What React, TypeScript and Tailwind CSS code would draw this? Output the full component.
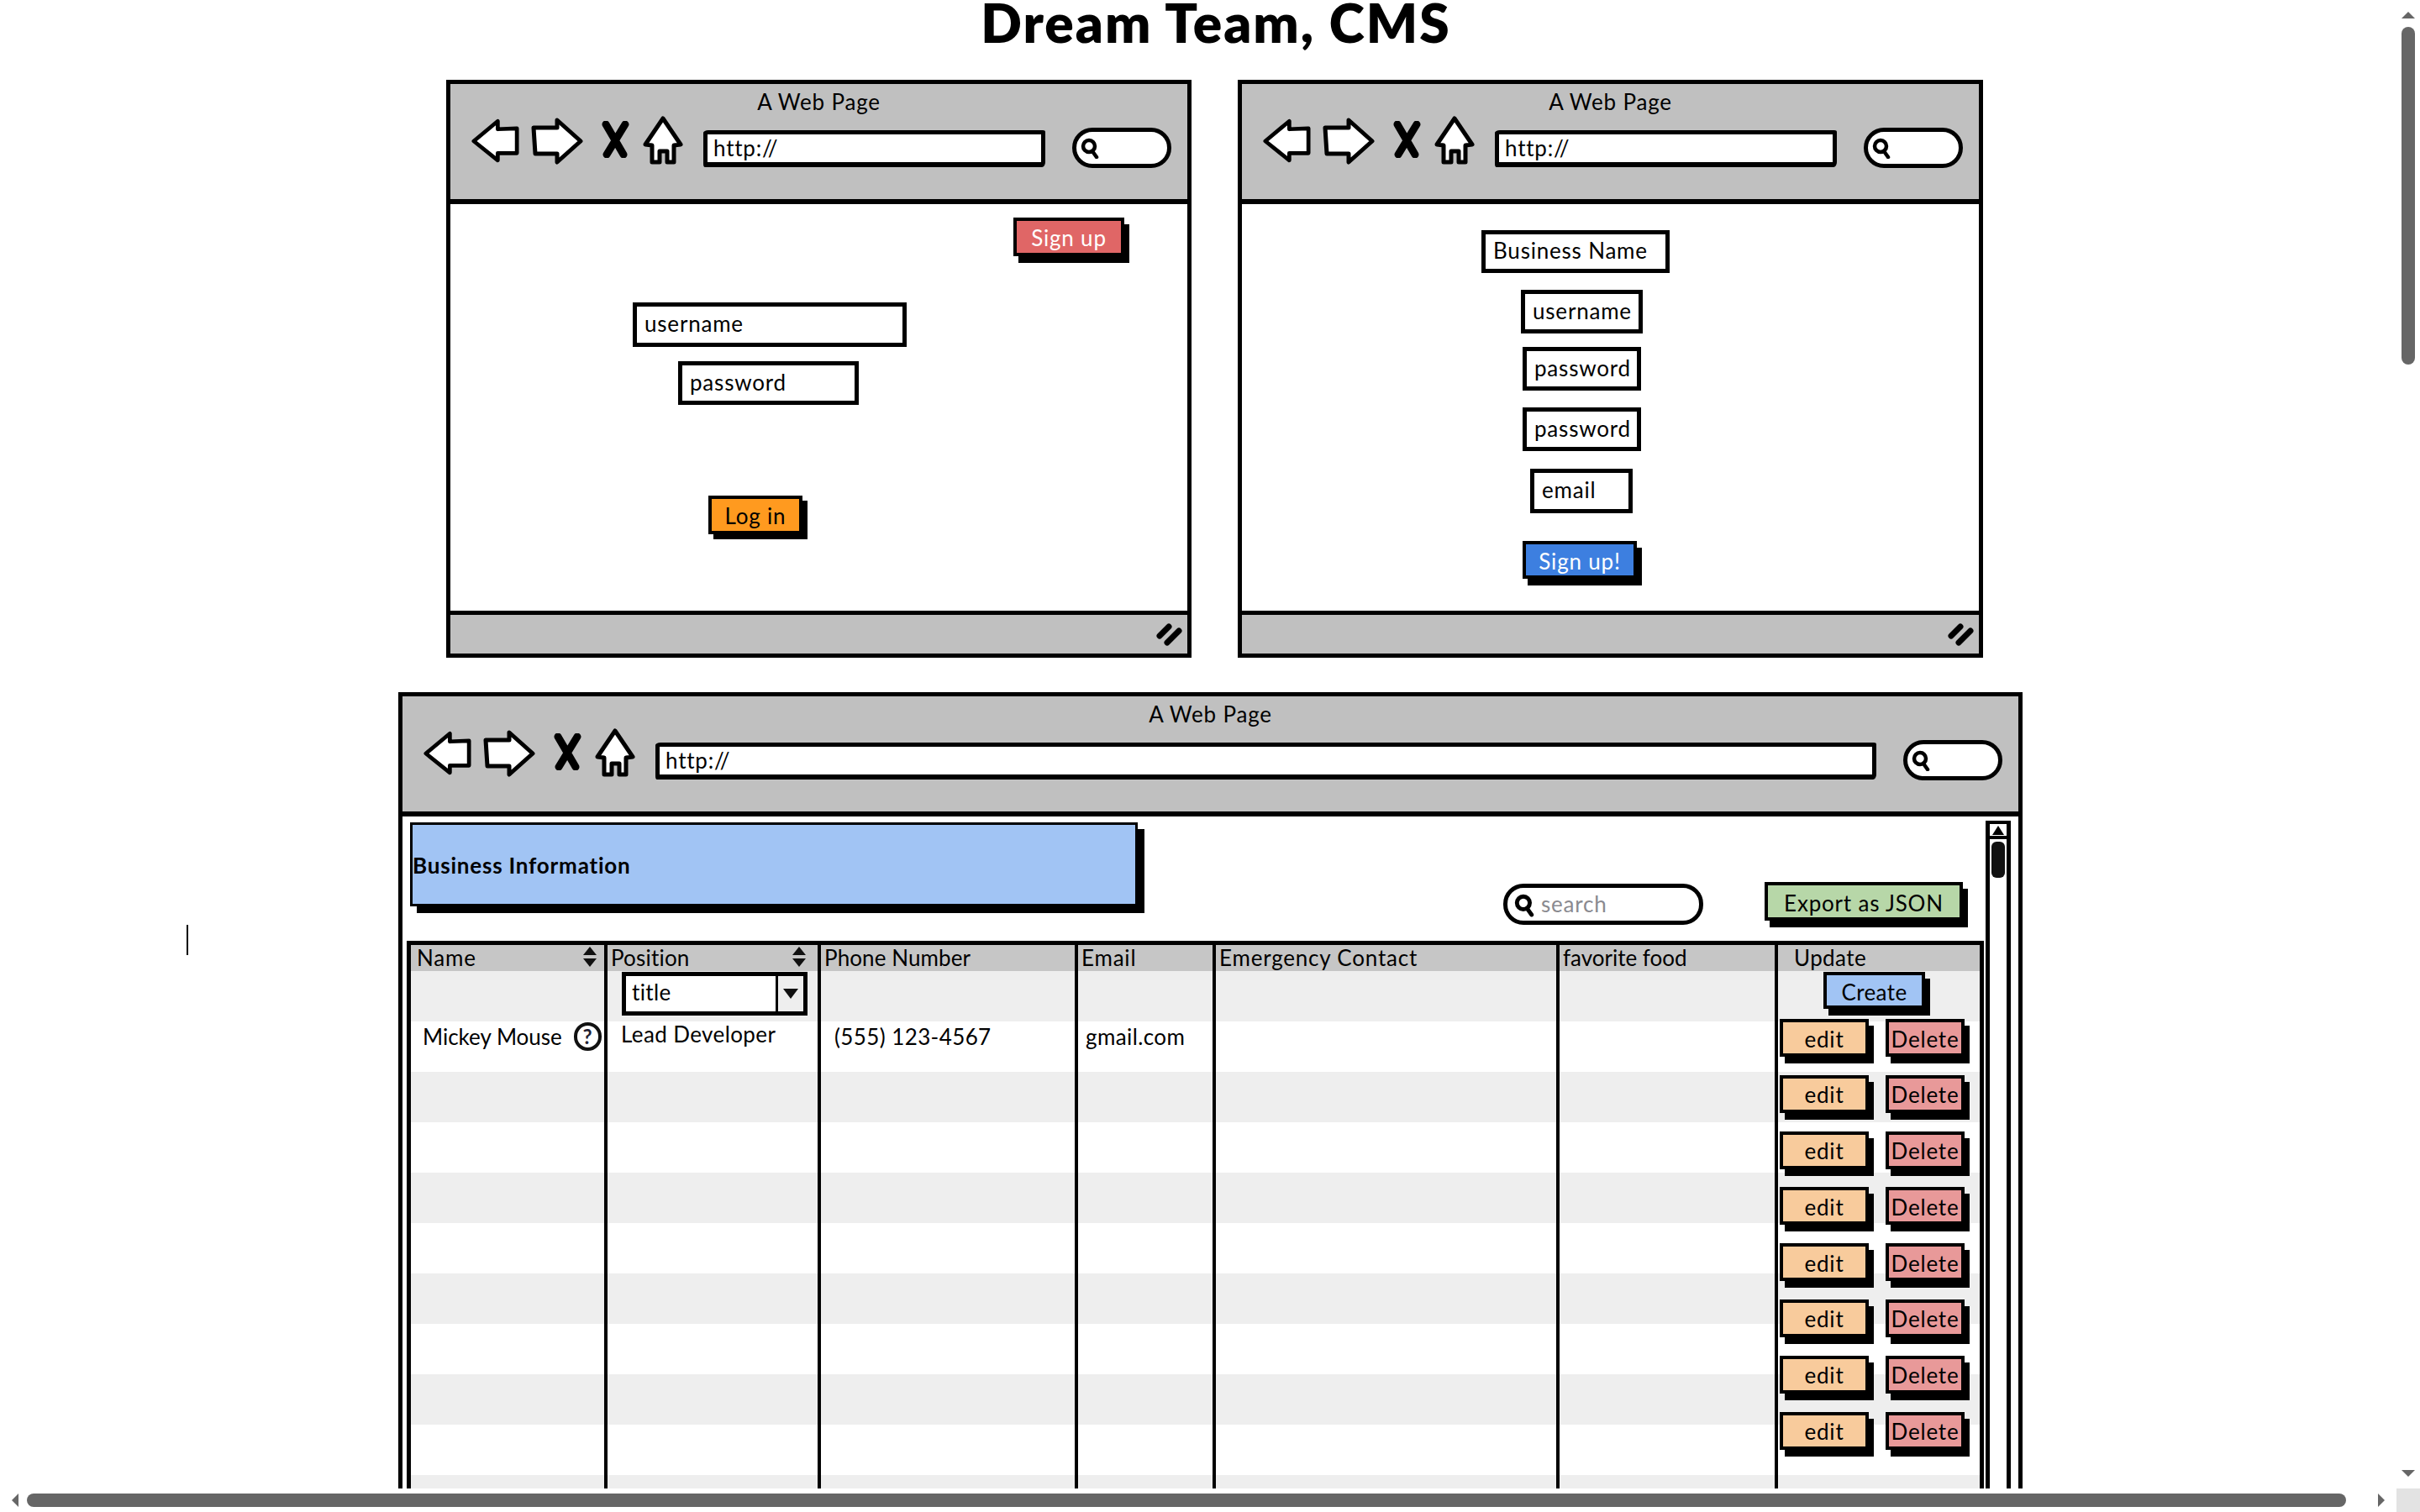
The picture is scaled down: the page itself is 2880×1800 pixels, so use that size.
import type { ReactNode } from 'react';

const FONT = "font-['Lato','Open_Sans',sans-serif]";

function BackIcon() {
  return (
    <svg className="w-[57px] h-[56px] shrink-0" viewBox="0 0 60 56">
      <path d="M3 28 L33 3 L33 13 L57 12 L57 43 L33 43 L33 52 Z" fill="#fff" stroke="#000" strokeWidth="5" strokeLinejoin="round" />
    </svg>
  );
}

function ForwardIcon() {
  return (
    <svg className="w-[62px] h-[56px] shrink-0 ml-[14px]" viewBox="0 0 62 56">
      <path d="M3 12 L31 12 L31 3 L59 28 L31 53 L31 43 L5 43 Z" fill="#fff" stroke="#000" strokeWidth="5" strokeLinejoin="round" />
    </svg>
  );
}

function StopIcon() {
  return (
    <svg className="w-[36px] h-[44px] shrink-0 ml-[20px] mt-[4px]" viewBox="0 0 36 44">
      <path d="M7 4 L28 40 M30 4 L8 40" fill="none" stroke="#000" strokeWidth="9" strokeLinecap="round" />
    </svg>
  );
}

function HomeIcon() {
  return (
    <svg className="w-[50px] h-[58px] shrink-0 ml-[14px] -mt-[2px]" viewBox="0 0 50 58">
      <path d="M25 3 L46 34 L38 35 L38 55 L30 55 L30 42 L21 42 L21 55 L12 55 L12 35 L4 34 Z" fill="#fff" stroke="#000" strokeWidth="5" strokeLinejoin="round" />
    </svg>
  );
}

function MagnifierIcon({ className }: { className: string }) {
  return (
    <svg className={className} viewBox="0 0 22 26">
      <circle cx="10" cy="11" r="7" fill="#fff" stroke="#000" strokeWidth="4.5" />
      <path d="M14 17 L19 24" stroke="#000" strokeWidth="4.5" strokeLinecap="round" />
    </svg>
  );
}

function ResizeIcon() {
  return (
    <svg className="w-[34px] h-[30px]" viewBox="0 0 34 30">
      <path d="M5 17 L16 6 M14 25 L28 11" stroke="#000" strokeWidth="7" strokeLinecap="round" />
    </svg>
  );
}

function SortIcon() {
  return (
    <svg className="w-[18px] h-[24px] shrink-0 mt-[2px]" viewBox="0 0 18 24">
      <path d="M9 0 L17 10 L1 10 Z M1 14 L17 14 L9 24 Z" fill="#111" />
    </svg>
  );
}

function Browser({ className, children, footer = true }: { className: string; children: ReactNode; footer?: boolean }) {
  return (
    <div className={`border-[5px] border-black bg-white flex flex-col ${className}`}>
      <div className="h-[143px] shrink-0 bg-[#c0c0c0] border-b-[6px] border-black">
        <div className="h-[40px] pt-[5px] text-center text-[26px] leading-[32px]">A Web Page</div>
        <div className="flex items-start pl-[25px] pr-[19px]">
          <BackIcon />
          <ForwardIcon />
          <StopIcon />
          <HomeIcon />
          <div className="flex-1 ml-[23px] mt-[15px] h-[44px] bg-white border-[5px] border-b-[6px] border-black rounded-[6px_3px_4px_2px/3px_2px_6px_4px] pl-[7px] text-[26px] leading-[32px]">http://</div>
          <div className="w-[118px] h-[48px] ml-[32px] mt-[12px] bg-white border-[5px] border-black rounded-[24px] flex items-center pl-[5px]">
            <MagnifierIcon className="w-[22px] h-[26px]" />
          </div>
        </div>
      </div>
      <div className="flex-1 flex flex-col min-h-0">{children}</div>
      {footer && (
        <div className="h-[51px] shrink-0 bg-[#c0c0c0] border-t-[5px] border-black flex justify-end items-center pr-[4px]">
          <ResizeIcon />
        </div>
      )}
    </div>
  );
}

function Field({ className, children }: { className: string; children: string }) {
  return (
    <div className={`shrink-0 self-start border-[5px] border-black bg-white pl-[9px] pb-[2px] flex items-center text-[26px] ${className}`}>
      {children}
    </div>
  );
}

function Btn({ className, children }: { className: string; children: string }) {
  return (
    <div className={`shrink-0 border-[4px] border-black flex items-center justify-center pt-[3px] text-[26px] whitespace-nowrap ${className}`}>
      {children}
    </div>
  );
}

const columns = ['w-[234px]', 'w-[254px]', 'w-[306px]', 'w-[164px]', 'w-[409px]', 'w-[260px]', 'w-[239px]'];
const headers = [
  { label: 'Name', spacing: 'tracking-[0.8px]' },
  { label: 'Position', spacing: 'tracking-[0.2px]' },
  { label: 'Phone Number', spacing: 'tracking-[0.1px]' },
  { label: 'Email', spacing: 'tracking-[0.8px]' },
  { label: 'Emergency Contact', spacing: 'tracking-[0.8px]' },
  { label: 'favorite food', spacing: 'tracking-[0px]' },
  { label: 'Update', spacing: 'tracking-[0.4px]' },
];
const rowCount = 10;

export default function App() {
  return (
    <div className={`relative w-[2880px] h-[1800px] overflow-hidden bg-white text-black tracking-[0.8px] ${FONT}`}>
      <h1 className="h-[95px] pl-[14px] text-center text-[64px] leading-[54px] font-extrabold tracking-[2px]">Dream Team, CMS</h1>

      <div className="flex gap-[55px] pl-[531px]">
        <Browser className="w-[887px] h-[688px]">
          <Btn className="self-end mt-[16px] mr-[75px] w-[132px] h-[46px] bg-[#e06666] text-white shadow-[6px_8px_0_#000]">Sign up</Btn>
          <Field className="ml-[217px] mt-[55px] w-[326px] h-[53px]">username</Field>
          <Field className="ml-[271px] mt-[17px] w-[215px] h-[52px]">password</Field>
          <Btn className="ml-[307px] mt-[108px] w-[112px] h-[46px] bg-[#ff9a1f] shadow-[6px_6px_0_#000]">Log in</Btn>
        </Browser>

        <Browser className="w-[887px] h-[688px]">
          <Field className="ml-[285px] mt-[31px] w-[224px] h-[51px]">Business Name</Field>
          <Field className="ml-[332px] mt-[20px] w-[145px] h-[52px]">username</Field>
          <Field className="ml-[334px] mt-[16px] w-[141px] h-[52px]">password</Field>
          <Field className="ml-[334px] mt-[20px] w-[141px] h-[52px]">password</Field>
          <Field className="ml-[343px] mt-[21px] w-[122px] h-[53px]">email</Field>
          <Btn className="self-start ml-[334px] mt-[33px] w-[136px] h-[45px] bg-[#3d7fe0] text-white shadow-[6px_8px_0_#000]">Sign up!</Btn>
        </Browser>
      </div>

      <div className="pl-[474px] pt-[41px]">
        <Browser className="w-[1933px] h-[1000px] border-b-0" footer={false}>
          <div className="flex-1 flex min-h-0">
            <div className="w-[1882px] shrink-0 flex flex-col pl-[5px]">
              <div className="h-[148px] shrink-0 flex items-start pl-[4px]">
                <div className="mt-[7px] w-[866px] h-[100px] pt-[2px] bg-[#a1c4f4] border-[3px] border-black shadow-[8px_8px_0_#000] flex items-center font-bold text-[26px]">
                  Business Information
                </div>
                <div className="ml-[435px] mt-[80px] w-[238px] h-[49px] border-[5px] border-black rounded-[24px] flex items-center pl-[8px] text-[26px] text-[#8a8a90]">
                  <MagnifierIcon className="w-[24px] h-[30px] mr-[8px]" />
                  search
                </div>
                <Btn className="ml-[73px] mt-[78px] w-[236px] h-[46px] pt-[5px] bg-[#b7d7a8] shadow-[6px_8px_0_#000]">Export as JSON</Btn>
              </div>

              <div className="relative flex-1 min-h-0 overflow-hidden border-[5px] border-b-0 border-black bg-white w-[1877px]">
                <div className="flex h-[31px] bg-[#c6c6c6] text-[26px] leading-[30px]">
                  {headers.map((h, i) => (
                    <div
                      key={h.label}
                      className={`${columns[i]} shrink-0 flex justify-between pl-[4px] pr-[8px] first:pl-[7px] last:pl-[19px] even:pr-[13px] ${h.spacing} ${i < 6 ? 'border-r-[4px] border-black' : ''}`}
                    >
                      <span>{h.label}</span>
                      {i < 2 && <SortIcon />}
                    </div>
                  ))}
                </div>

                {Array.from({ length: rowCount + 1 }).map((_, r) => (
                  <div key={r} className={`flex h-[60px] text-[26px] tracking-[0.4px] ${r % 2 === 0 ? 'bg-[#eeeeee]' : 'bg-white'}`}>
                    {columns.map((c, i) => (
                      <div key={c} className={`${c} shrink-0 ${i < 6 ? 'border-r-[4px] border-black' : ''}`}>
                        {r === 0 && i === 1 && (
                          <div className="ml-[17px] mt-[1px] w-[221px] h-[52px] bg-white border-[5px] border-black flex items-stretch">
                            <span className="flex-1 pl-[7px] leading-[38px]">title</span>
                            <span className="w-[33px] border-l-[3px] border-black bg-[#eeeeee] flex items-center justify-center">
                              <svg className="w-[18px] h-[12px]" viewBox="0 0 18 12"><path d="M0 0 L18 0 L9 12 Z" fill="#111" /></svg>
                            </span>
                          </div>
                        )}
                        {r === 0 && i === 6 && (
                          <Btn className="ml-[54px] mt-[1px] w-[121px] h-[44px] pt-[5px] bg-[#a1c4f4] shadow-[6px_8px_0_#000]">Create</Btn>
                        )}
                        {r === 1 && i === 0 && (
                          <div className="flex items-center pl-[14px] pt-[2px] h-[34px] whitespace-nowrap">
                            <span className="tracking-[0px]">Mickey Mouse</span>
                            <span className="ml-[14px] w-[33px] h-[34px] shrink-0 rounded-full border-[4px] border-[#111] flex items-center justify-center text-[24px] font-bold text-[#223]">?</span>
                          </div>
                        )}
                        {r === 1 && i === 1 && <div className="pl-[16px] leading-[30px]">Lead Developer</div>}
                        {r === 1 && i === 2 && <div className="pl-[16px] leading-[36px]">(555) 123-4567</div>}
                        {r === 1 && i === 3 && <div className="pl-[9px] leading-[36px]">gmail.com</div>}
                      </div>
                    ))}
                  </div>
                ))}

                {/* edit / delete stack sits over the stripes on its own rhythm */}
                <div className="absolute left-[1629px] top-[88px] flex flex-col gap-[21.8px]">
                  {Array.from({ length: 8 }).map((_, i) => (
                    <div key={i} className="flex gap-[20px]">
                      <Btn className="w-[106px] h-[45px] bg-[#f8cb9c] shadow-[6px_8px_0_#000]">edit</Btn>
                      <Btn className="w-[94px] h-[45px] bg-[#e89999] shadow-[6px_8px_0_#000]">Delete</Btn>
                    </div>
                  ))}
                </div>
              </div>
            </div>

            {/* inner scrollbar */}
            <div className="w-[30px] ml-[2px] mt-[5px] shrink-0 flex flex-col border-x-[5px] border-black">
              <div className="h-[22px] -mx-[5px] border-[4px] border-black flex items-center justify-center">
                <svg className="w-[14px] h-[11px]" viewBox="0 0 14 11"><path d="M7 0 L14 11 L0 11 Z" fill="#000" /></svg>
              </div>
              <div className="mt-[3px] mx-auto w-[16px] h-[43px] rounded-[6px] bg-[#111]" />
            </div>
          </div>
        </Browser>
      </div>

      {/* text caret */}
      <div className="absolute left-[222px] top-[1101px] w-[2px] h-[36px] bg-black" />

      {/* page scrollbars */}
      <div className="absolute right-0 bottom-0 w-[28px] h-[28px] bg-[#e3e3e3]" />
      <div className="absolute left-0 bottom-0 h-[28px] w-[2852px] bg-white">
        <svg className="absolute left-[14px] top-[6px] w-[8px] h-[16px]" viewBox="0 0 8 16"><path d="M8 0 L8 16 L0 8 Z" fill="#666" /></svg>
        <div className="absolute left-[32px] top-[6px] w-[2760px] h-[16px] rounded-[8px] bg-[#666]" />
        <svg className="absolute left-[2830px] top-[6px] w-[8px] h-[16px]" viewBox="0 0 8 16"><path d="M0 0 L8 8 L0 16 Z" fill="#666" /></svg>
      </div>
      <svg className="absolute left-[2858px] top-[14px] w-[16px] h-[8px]" viewBox="0 0 16 8"><path d="M8 0 L16 8 L0 8 Z" fill="#666" /></svg>
      <div className="absolute left-[2858px] top-[32px] w-[16px] h-[402px] rounded-[8px] bg-[#666]" />
      <svg className="absolute left-[2858px] top-[1750px] w-[16px] h-[8px]" viewBox="0 0 16 8"><path d="M0 0 L16 0 L8 8 Z" fill="#666" /></svg>
    </div>
  );
}
